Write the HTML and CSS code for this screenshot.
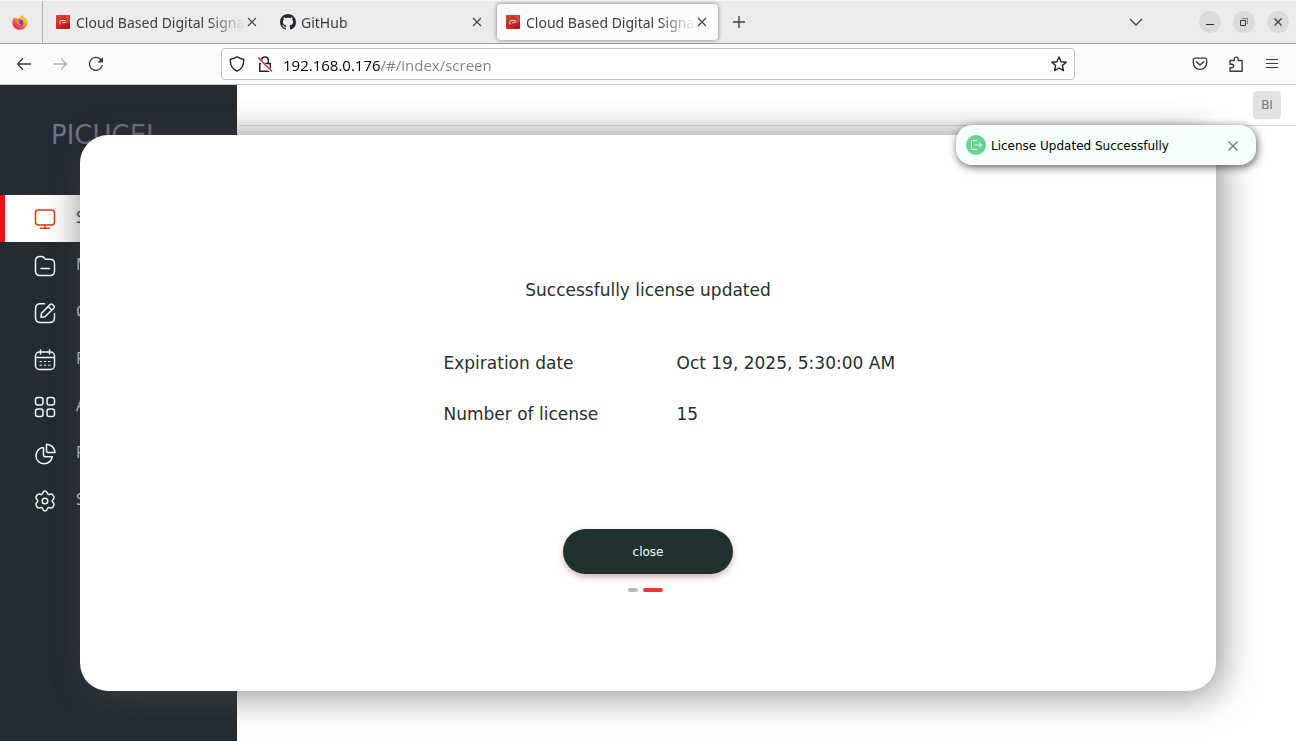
FILE: index.html
```html
<!DOCTYPE html>
<html lang="en">
<head>
<meta charset="utf-8">
<title>Cloud Based Digital Signage</title>
<link rel="stylesheet" href="styles.css">
</head>
<body>
<svg class="defs" width="0" height="0" aria-hidden="true">
  <defs>
    <linearGradient id="red" x1="0" y1="0" x2="1" y2="1"><stop offset="0" stop-color="#d04a38"/><stop offset=".55" stop-color="#c8281f"/><stop offset="1" stop-color="#a80f17"/></linearGradient>
    <linearGradient id="fire" x1="1" y1="0" x2="0.2" y2="1"><stop offset="0" stop-color="#fff04a"/><stop offset=".4" stop-color="#ffb02e"/><stop offset=".7" stop-color="#ff5a3c"/><stop offset="1" stop-color="#f0147a"/></linearGradient>
    <symbol id="brand" viewBox="0 0 16 16"><rect x="1" y="1" width="14" height="14" rx="1" fill="url(#red)"/><path d="M10 1c2 2 3 5 3 8M12 1c1.500 2 2 4 2.500 6" stroke="#e88a80" stroke-width=".6" fill="none"/><path d="M5 10.500V7.500q0-1 1-1h4q1 0 1 1t-1 1.200H7" stroke="#f6cfca" fill="none"/></symbol>
    <symbol id="x" viewBox="0 0 12 12"><path d="M2 2l8 8M10 2l-8 8" stroke="currentColor" stroke-width="1.200" fill="none"/></symbol>
  </defs>
</svg>
<header class="browser">
  <div class="tabbar">
    <button class="pinned" aria-label="Firefox">
      <svg width="16" height="16" viewBox="0 0 16 16"><path d="M8 15.800C3.700 15.800.300 12.600.300 8.400c0-2 .9-4 2-5.200l.3 1.600L4.200 3.200l.5 1.500C6 4.300 7 4 8.200 4 8.300 2.500 9.300 1 10.500.300c.2 1.700 1.300 2.400 2.600 3.600l.4-.7c1.500 1.400 2.300 3.200 2.300 5.100 0 4.300-3.500 7.500-7.800 7.500z" fill="url(#fire)"/><path d="M2.500 5.500C4 4.800 6 5 7.200 5.700 5.500 6 5 7 4 7.200z" fill="#ff8a1f"/><circle cx="8" cy="8.800" r="3.300" fill="#6c3fd6"/><path d="M4.500 7.300C6 6 7.600 6 8.300 7.200 7.500 7.800 6.800 7.800 6.800 8.600c0 1.300 1.800 1.700 2.900 1-1 2.900-5.300 2.300-5.200-2.300z" fill="#ff8426"/></svg>
    </button>
    <nav class="tabs" aria-label="Tabs">
      <div class="tab"><svg class="fav"><use href="#brand"/></svg><span class="title">Cloud Based Digital Signage</span><button class="tab-close" aria-label="Close tab"><svg width="12" height="12"><use href="#x"/></svg></button></div>
      <div class="tab"><svg class="fav" viewBox="0 0 16 16"><path fill="#24292f" d="M8 0C3.580 0 0 3.580 0 8c0 3.540 2.290 6.530 5.470 7.590.4.070.55-.17.55-.38 0-.19-.01-.82-.01-1.490-2.010.37-2.530-.49-2.690-.94-.09-.23-.48-.94-.82-1.130-.28-.15-.68-.52-.01-.53.630-.01 1.080.58 1.230.82.720 1.210 1.870.87 2.330.66.070-.52.280-.87.510-1.070-1.780-.2-3.640-.89-3.640-3.950 0-.87.310-1.590.82-2.150-.08-.2-.36-1.020.08-2.120 0 0 .67-.21 2.200.82.640-.18 1.320-.27 2-.27s1.360.09 2 .27c1.530-1.040 2.200-.82 2.200-.82.440 1.100.16 1.920.08 2.120.510.560.82 1.270.82 2.150 0 3.070-1.870 3.750-3.650 3.950.290.250.540.730.540 1.480 0 1.070-.01 1.930-.01 2.200 0 .21.150.46.550.38A8.010 8.010 0 0016 8c0-4.420-3.580-8-8-8z"/></svg><span class="title">GitHub</span><button class="tab-close" aria-label="Close tab"><svg width="12" height="12"><use href="#x"/></svg></button></div>
      <div class="tab active"><svg class="fav"><use href="#brand"/></svg><span class="title">Cloud Based Digital Signage</span><button class="tab-close" aria-label="Close tab"><svg width="12" height="12"><use href="#x"/></svg></button></div>
      <button class="new-tab" aria-label="New tab"><svg width="14" height="14" viewBox="0 0 14 14"><path d="M7 1v12M1 7h12" stroke="#3a3a3a" stroke-width="1.300"/></svg></button>
    </nav>
    <div class="window-tools">
      <button class="list-tabs" aria-label="List all tabs"><svg width="14" height="14" viewBox="0 0 14 14"><path d="M1 4l6 6 6-6" fill="none" stroke="#444" stroke-width="1.400"/></svg></button>
      <button class="win" aria-label="Minimize"><svg width="12" height="12" viewBox="0 0 12 12"><path d="M2 8.500h8" stroke="#333"/></svg></button>
      <button class="win" aria-label="Restore"><svg width="12" height="12" viewBox="0 0 12 12"><path d="M2.500 4.500h5v5h-5z" fill="none" stroke="#333"/><path d="M4 2.500h5.500V8" fill="none" stroke="#888"/></svg></button>
      <button class="win" aria-label="Close window"><svg width="12" height="12" viewBox="0 0 12 12"><path d="M2.500 2.500l7 7M9.500 2.500l-7 7" stroke="#444" stroke-width="1.400"/></svg></button>
    </div>
  </div>
  <div class="toolbar">
    <div class="history">
      <button aria-label="Back"><svg width="16" height="16" viewBox="0 0 16 16"><path d="M15 8H1.500M7 2.500L1.500 8 7 13.500" fill="none" stroke="#3a3a3a" stroke-width="1.300"/></svg></button>
      <button aria-label="Forward" disabled><svg width="16" height="16" viewBox="0 0 16 16"><path d="M1 8h13.500M9 2.500L14.500 8 9 13.500" fill="none" stroke="#b0b0b0" stroke-width="1.300"/></svg></button>
      <button aria-label="Reload"><svg width="16" height="16" viewBox="0 0 16 16"><path d="M14.300 9A6.500 6.500 0 1 1 12.500 3.300L14 5" fill="none" stroke="#3a3a3a" stroke-width="1.300"/><path d="M15 1v5.500H9.500z" fill="#3a3a3a"/></svg></button>
    </div>
    <div class="urlbar">
      <svg width="16" height="16" viewBox="0 0 16 16"><path d="M8 .8C10 2.300 12.500 3 14.700 3.200c.2 5.300-1.500 9.800-6.700 12C2.800 13 1.100 8.500 1.300 3.200 3.500 3 6 2.300 8 .8z" fill="none" stroke="#222" stroke-width="1.400" stroke-linejoin="round"/></svg>
      <svg width="16" height="16" viewBox="0 0 16 16"><path d="M4.700 7V4.200a3.300 3.300 0 0 1 6.600 0V7M2.700 7.500h10.600v7.700H2.700z" fill="none" stroke="#222" stroke-width="1.500" stroke-linejoin="round"/><path d="M1 2.500l13.500 13" stroke="#fff" stroke-width="3"/><path d="M1 1.500l14 14" stroke="#e22850" stroke-width="1.400"/></svg>
      <input class="url" type="text" aria-label="Address" value="192.168.0.176/#/index/screen">
      <button aria-label="Bookmark"><svg width="16" height="16" viewBox="0 0 16 16"><path d="M8 1l2.100 4.700 5.100.5-3.800 3.400 1.100 5L8 12l-4.500 2.600 1.100-5L.8 6.200l5.100-.5z" fill="none" stroke="#222" stroke-width="1.400" stroke-linejoin="round"/></svg></button>
    </div>
    <div class="actions">
      <button aria-label="Pocket"><svg width="16" height="16" viewBox="0 0 16 16"><path d="M3 2.200h10q1.700 0 1.700 1.700v2.800a6.700 6.700 0 0 1-13.400 0V3.900q0-1.700 1.700-1.700z" fill="none" stroke="#3a3a3a" stroke-width="1.300"/><path d="M4.500 5.800L8 9l3.500-3.200" fill="none" stroke="#3a3a3a" stroke-width="1.500" stroke-linecap="round"/></svg></button>
      <button aria-label="Extensions"><svg width="16" height="16" viewBox="0 0 16 16"><path d="M2 4.500h4.300V3a1.900 1.900 0 0 1 3.800 0v1.500h4v10.700H2v-3.400h1.800a1.800 1.800 0 0 0 0-3.600H2z" fill="none" stroke="#3a3a3a" stroke-width="1.400" stroke-linejoin="round"/></svg></button>
      <button aria-label="Menu"><svg width="16" height="16" viewBox="0 0 16 16"><path d="M2 3.500h12M2 7.500h12M2 11.500h12" stroke="#3a3a3a" stroke-width="1.200"/></svg></button>
    </div>
  </div>
</header>
<div class="app">
  <aside class="sidebar">
    <div class="logo">PICUCEL</div>
    <nav class="menu">
      <a class="item current" href="#screen"><svg class="ico" viewBox="0 0 22 22"><rect x="1.500" y="2" width="19" height="15" rx="3"/><path d="M6.500 20.200h9M11 17v3"/></svg><span class="label">Screen</span></a>
      <a class="item" href="#media"><svg class="ico" viewBox="0 0 22 22"><path d="M1.500 6q0-4.500 4.500-4.500h1.500q1.500 0 2.500 1.200l1.500 1.600h4.500q4.500 0 4.500 4.500V16q0 4.500-4.500 4.500H6Q1.500 20.500 1.500 16zM7 13.500h8.500"/></svg><span class="label">Media</span></a>
      <a class="item" href="#composition"><svg class="ico" viewBox="0 0 22 22"><path d="M10.500 1.700H6.500Q1.500 1.700 1.500 6.700v8.800q0 5 5 5h9q5 0 5-5v-4M7 15.200l.5-4L16.300 2.400q1-1 2.300.1l1.200 1.200q1.100 1.200.1 2.300L11 14.800zM14.200 4.500l3.500 3.500"/></svg><span class="label">Composition</span></a>
      <a class="item" href="#planner"><svg class="ico" viewBox="0 0 22 22"><rect x="1.500" y="3" width="19" height="17.500" rx="4"/><path d="M6.500 1v4M15.500 1v4M2 8.500h18"/><path class="dots" d="M6 12.500h1.500M10.300 12.500h1.500M14.500 12.500H16M6 16.200h1.500M10.300 16.200h1.500M14.500 16.200H16"/></svg><span class="label">Planner</span></a>
      <a class="item" href="#apps"><svg class="ico" viewBox="0 0 22 22"><rect x="1.500" y="1.500" width="7.500" height="7.500" rx="2.300"/><rect x="13" y="1.500" width="7.500" height="7.500" rx="2.300"/><rect x="1.500" y="13" width="7.500" height="7.500" rx="2.300"/><rect x="13" y="13" width="7.500" height="7.500" rx="2.300"/></svg><span class="label">Apps</span></a>
      <a class="item" href="#reports"><svg class="ico" viewBox="0 0 22 22"><path d="M9 4.500a8.200 8.200 0 1 0 9.300 9.200l-7 .1q-1.700 0-1.800-1.800V5z"/><path d="M12.500 1.300q7.500.7 8.600 8.200l-7.100.1q-1.500 0-1.500-1.500z"/></svg><span class="label">Reports</span></a>
      <a class="item" href="#settings"><svg class="ico" viewBox="0 0 22 22"><circle cx="11" cy="11" r="2.800"/><path d="M8.700 3.100Q9.200 1 11 1t2.300 2.100q.6 1.800 2.500 1.100l1.300-.3q1.500.2 2.400 2t.1 3q-1.500 1.600-1.500 2.100t1.500 2.100q.8 1.200-.1 3t-2.400 2l-1.300-.3q-1.900-.7-2.500 1.100Q12.800 21 11 21t-2.300-2.100q-.6-1.800-2.500-1.100l-1.300.3q-1.500-.2-2.400-2t-.1-3q1.500-1.600 1.500-2.100T2.400 8.900q-.8-1.200.1-3t2.400-2l1.300.3q1.900.7 2.500-1.100z"/></svg><span class="label">Settings</span></a>
    </nav>
  </aside>
  <main class="main">
    <div class="topbar"><button class="avatar">BI</button></div>
  </main>
  <section class="modal" role="dialog" aria-labelledby="modal-title">
    <h1 class="modal-title" id="modal-title">Successfully license updated</h1>
    <div class="details">
      <table class="facts">
        <tr><th scope="row">Expiration date</th><td>Oct 19, 2025, 5:30:00 AM</td></tr>
        <tr><th scope="row">Number of license</th><td>15</td></tr>
      </table>
    </div>
    <button class="close-button">close</button>
    <div class="steps"><span class="step"></span><span class="step on"></span></div>
  </section>
  <div class="toast" role="status">
    <svg width="20" height="20" viewBox="0 0 20 20"><circle cx="10" cy="10" r="10" fill="#67d391"/><path d="M11 5.500H6.500q-1 0-1 1v7q0 1 1 1H11M8.500 10h7M13 7.500l2.500 2.500-2.500 2.500" fill="none" stroke="#e4faec"/></svg>
    <span class="toast-text">License Updated Successfully</span>
    <button class="toast-close" aria-label="Dismiss"><svg width="12" height="12" viewBox="0 0 12 12"><path d="M1.500 1.500l9 9M10.500 1.500l-9 9" stroke="#777" stroke-width="1.400"/></svg></button>
  </div>
</div>
</body>
</html>
```
FILE: styles.css
```css
* { box-sizing: border-box; }
body {
  margin: 0;
  min-height: 100vh;
  display: flex;
  flex-direction: column;
  font-family: "DejaVu Sans", sans-serif;
  background: #fff;
}
button {
  display: inline-flex;
  align-items: center;
  justify-content: center;
  padding: 0;
  border: 0;
  background: none;
  font: inherit;
}
svg { flex: none; display: block; }
.defs { position: absolute; }

.browser { font-family: "Noto Sans", "Open Sans", sans-serif; }
.tabbar {
  display: flex;
  height: 44px;
  background: #ebebeb;
  border-top: 1px solid #fafafa;
  border-bottom: 1px solid #a2a2a2;
}
.pinned { width: 43px; padding-right: 2px; border-right: 1px solid #b4b4b4; }
.tabs { flex: 1; display: flex; align-items: center; gap: 4px; padding-left: 4px; }
.tab {
  display: flex;
  align-items: center;
  width: 221px;
  height: 36px;
  padding: 0 9px 0 8px;
  border-radius: 4px;
  color: #3c3c3c;
}
.tab.active { background: #fbfbfb; box-shadow: 0 0 4px rgba(0, 0, 0, .5); }
.fav { width: 16px; height: 16px; }
.title {
  flex: 1;
  margin-left: 5px;
  padding-top: 2px;
  overflow: hidden;
  white-space: nowrap;
  font-size: 14px;
  line-height: 20px;
  mask-image: linear-gradient(to left, transparent, #000 36px);
}
.tab-close { width: 14px; height: 20px; color: #444; }
.new-tab { width: 34px; height: 34px; }
.window-tools { display: flex; align-items: center; gap: 12px; padding-right: 7px; }
.list-tabs { width: 22px; height: 22px; margin-right: 40px; }
.win { width: 22px; height: 22px; border-radius: 50%; background: #dadada; }

.toolbar {
  display: flex;
  align-items: center;
  height: 41px;
  background: #fbfbfb;
  border-bottom: 1px solid #c8c8c8;
}
.history { display: flex; gap: 20px; width: 221px; padding-left: 16px; }
.urlbar {
  flex: 1;
  display: flex;
  align-items: center;
  gap: 12px;
  height: 32px;
  padding: 0 7px;
  border: 1px solid #c4c4c4;
  border-radius: 4px;
  background: #fff;
}
.url {
  flex: 1;
  min-width: 0;
  padding: 2px 0 0;
  margin-left: -2px;
  border: 0;
  outline: 0;
  font: 15px/20px "Open Sans", "Noto Sans", sans-serif;
  color: transparent;
  background: linear-gradient(to right, #000 98px, #808080 98px);
  background-clip: text;
}
.actions { display: flex; justify-content: flex-end; gap: 20px; width: 221px; padding-right: 16px; }

.app { position: relative; flex: 1; display: flex; overflow: hidden; }
.sidebar { width: 237px; background: #232b33; }
.logo {
  height: 110px;
  padding: 36px 0 0 51px;
  font-size: 26px;
  line-height: 28px;
  color: #75738c;
}
.menu { display: flex; flex-direction: column; }
.item {
  display: flex;
  align-items: center;
  gap: 20px;
  height: 47px;
  padding-left: 34px;
  font: 16px/20px "Open Sans", "Noto Sans", sans-serif;
  color: #dcdcdc;
  text-decoration: none;
}
.item.current {
  padding-left: 29px;
  border-left: 5px solid #ec1313;
  background: #fff;
  color: #333;
}
.label { padding-bottom: 4px; }
.ico {
  width: 22px;
  height: 22px;
  fill: none;
  stroke: #f4f4f4;
  stroke-width: 1.5;
  stroke-linecap: round;
  stroke-linejoin: round;
}
.current .ico { stroke: #e8350f; }
.ico .dots { stroke-width: 1; }
.main { flex: 1; }
.topbar {
  display: flex;
  justify-content: flex-end;
  height: 41px;
  margin-left: 2px;
  padding: 6px 15px 0 0;
  border-bottom: 1px solid #dcdcdc;
}
.avatar {
  width: 28px;
  height: 28px;
  border-radius: 4px;
  background: #e2e2e2;
  color: #7c7c7c;
  font: 13px/20px Roboto, sans-serif;
}

.modal {
  position: absolute;
  inset: 50px 80px;
  display: flex;
  flex-direction: column;
  align-items: center;
  padding-top: 141px;
  border-radius: 28px;
  background: #fff;
  color: #1f302f;
  box-shadow: 8px 8px 36px rgba(90, 90, 90, .4), -2px -2px 32px rgba(40, 40, 40, .32);
}
.modal-title { margin: 0; font-size: 17px; line-height: 28px; font-weight: 400; }
.details { margin-top: 33px; padding-left: 57px; }
.facts { width: 466px; border-collapse: collapse; table-layout: fixed; font-size: 17px; }
.facts th, .facts td { height: 51px; padding: 0; text-align: left; font-weight: 400; }
.close-button {
  width: 170px;
  height: 45px;
  margin-top: 90px;
  border-radius: 23px;
  background: #1f3130;
  color: #fff;
  font-size: 12px;
  box-shadow: 0 3px 6px rgba(140, 60, 50, .4);
}
.steps { display: flex; gap: 5px; margin-top: 14px; padding-right: 5px; }
.step { width: 10px; height: 4px; border-radius: 2px; background: #bababa; }
.step.on { width: 20px; background: #e83835; }

.toast {
  position: absolute;
  top: 40px;
  right: 40px;
  display: flex;
  align-items: center;
  gap: 5px;
  width: 300px;
  height: 40px;
  padding: 0 16px 0 10px;
  border-radius: 16px;
  background: #f5fffb;
  box-shadow: 1px 2px 9px rgba(0, 0, 0, .65);
}
.toast-text { flex: 1; padding-top: 2px; font-size: 12px; line-height: 16px; color: #000; }
.toast-close { width: 14px; height: 20px; padding-top: 2px; }
```
